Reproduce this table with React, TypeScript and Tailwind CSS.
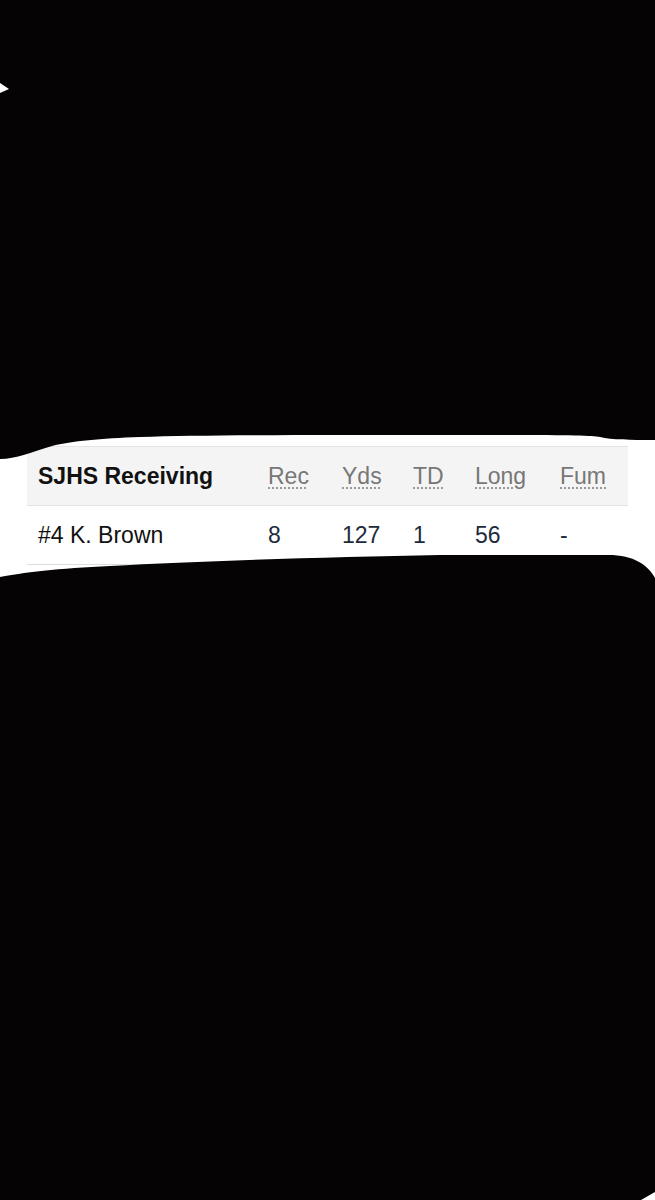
const columns = [
  { label: "Rec", value: "8" },
  { label: "Yds", value: "127" },
  { label: "TD", value: "1" },
  { label: "Long", value: "56" },
  { label: "Fum", value: "-" },
];

function Redactions() {
  return (
    <svg
      className="pointer-events-none absolute left-0 top-0"
      width="655"
      height="1200"
      viewBox="0 0 655 1200"
    >
      {/* marker strokes over the screenshot */}
      <path
        d="M0 415 H655 V440 C630 440 612 440 600 437 C590 435.5 560 435 440 435 C300 435 200 435 140 437 C100 438.5 72 441 52 446 C32 452 16 459 0 459 Z"
        fill="#050304"
      />
      <path
        d="M0 577 C20 573 60 568 110 566 C200 561 330 557 440 555 L608 555 C634 555 648 565 655 578 V605 H0 Z"
        fill="#050304"
      />
      <path d="M0 83 L9 89 L0 93 Z" fill="#ffffff" />
      <path d="M641 1200 L655 1192 L655 1200 Z" fill="#ffffff" />
    </svg>
  );
}

export default function App() {
  return (
    <div
      className="relative h-[1200px] w-full overflow-hidden bg-[#050304]"
      style={{ fontFamily: '"Liberation Sans", Arial, sans-serif' }}
    >
      <div className="h-[415px]" />
      <div className="h-[190px] bg-white px-[27px] pt-[31px]">
        <div className="grid grid-cols-[241px_74px_71px_62px_85px_68px]">
          <div className="flex h-[60px] items-center border-y border-[#e4e4e4] bg-[#f4f4f4] pl-[11px] text-[23px] font-bold text-[#111]">
            SJHS Receiving
          </div>
          {columns.map((c) => (
            <div
              key={c.label}
              className="flex h-[60px] items-center border-y border-[#e4e4e4] bg-[#f4f4f4] text-[23px] text-[#777]"
            >
              <span className="underline decoration-[#999] decoration-dotted decoration-[1.5px] underline-offset-[4px]">
                {c.label}
              </span>
            </div>
          ))}
          <div className="flex h-[59px] items-center border-b border-[#dcdcdc] pl-[11px] text-[23px] text-[#111]">
            #4 K. Brown
          </div>
          {columns.map((c) => (
            <div
              key={c.label}
              className="flex h-[59px] items-center border-b border-[#dcdcdc] text-[23px] text-[#1d2b3c]"
            >
              {c.value}
            </div>
          ))}
        </div>
      </div>
      <Redactions />
    </div>
  );
}
